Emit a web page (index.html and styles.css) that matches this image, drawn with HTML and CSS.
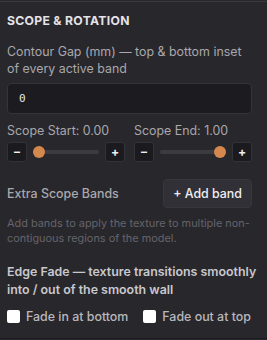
FILE: index.html
```html
<!DOCTYPE html>
<html>
<head>
<meta charset="utf-8">
<link rel="stylesheet" href="styles.css">
</head>
<body>
<section class="panel">
  <h2 class="title">SCOPE &amp; ROTATION</h2>
  <div class="field">
    <label class="label">Contour Gap (mm) — top &amp; bottom inset of every active band</label>
    <div class="input">0</div>
  </div>
  <div class="sliders">
    <div class="slider-group">
      <div class="label">Scope Start: 0.00</div>
      <div class="slider-row">
        <button class="step">–</button>
        <div class="track"><span class="thumb thumb-start"></span></div>
        <button class="step">+</button>
      </div>
    </div>
    <div class="slider-group">
      <div class="label">Scope End: 1.00</div>
      <div class="slider-row">
        <button class="step">–</button>
        <div class="track"><span class="thumb thumb-end"></span></div>
        <button class="step">+</button>
      </div>
    </div>
  </div>
  <div class="bands-row">
    <span class="label">Extra Scope Bands</span>
    <button class="add-btn">+ Add band</button>
  </div>
  <p class="help">Add bands to apply the texture to multiple non-contiguous regions of the model.</p>
  <div class="fade-title">Edge Fade — texture transitions smoothly into / out of the smooth wall</div>
  <div class="checks">
    <label class="check"><span class="box"></span>Fade in at bottom</label>
    <label class="check"><span class="box"></span>Fade out at top</label>
  </div>
</section>
</body>
</html>
```
FILE: styles.css
```css
* { box-sizing: border-box; }
html, body { margin: 0; padding: 0; background: #28272c; }
body { font-family: Inter, "Noto Sans", sans-serif; width: 267px; height: 340px; overflow: hidden; }
.panel {
  height: 338px;
  border-top: 1px solid #3a3940;
  border-bottom: 1px solid #1c1b1f;
  margin-top: 1px;
  padding: 12px 15px 0 7px;
}
.title {
  margin: 0;
  font-size: 12.2px;
  font-weight: 700;
  color: #e4e3e8;
  letter-spacing: 0.3px;
  line-height: 14px;
}
.field { margin-top: 15px; }
.label {
  display: block;
  font-size: 12.4px;
  color: #a9a8ad;
  line-height: 17px;
}
.input {
  margin-top: 6px;
  height: 31px;
  background: #1c1b20;
  border: 1px solid #35343a;
  border-radius: 4px;
  padding: 0 11px;
  font-family: "DejaVu Sans Mono", monospace;
  font-size: 11px;
  color: #e8e8ee;
  line-height: 29px;
}
.sliders {
  margin-top: 8px;
  display: grid;
  grid-template-columns: 1fr 1fr;
  column-gap: 9px;
}
.slider-row {
  margin-top: 3px;
  display: flex;
  align-items: center;
  gap: 4px;
}
.step {
  width: 20px;
  height: 20px;
  padding: 0;
  background: #1b1a1f;
  border: 1px solid #333238;
  border-radius: 3px;
  color: #f0f0f0;
  font-family: Inter, sans-serif;
  font-size: 12px;
  font-weight: 700;
  line-height: 18px;
}
.track {
  flex: 1;
  position: relative;
  height: 4px;
  background: #3c3b41;
  border-radius: 2px;
  margin: 0 2px;
}
.thumb {
  position: absolute;
  top: -4px;
  width: 12px;
  height: 12px;
  border-radius: 50%;
  background: #d4884e;
}
.thumb-start { left: 0; }
.thumb-end { right: 0; }
.bands-row {
  margin-top: 17px;
  display: flex;
  justify-content: space-between;
  align-items: center;
}
.bands-row .label { font-weight: 500; }
.add-btn {
  height: 29px;
  padding: 0 9px;
  background: #313036;
  border: 1px solid #37363c;
  border-radius: 4px;
  color: #eeeef2;
  font-family: Inter, sans-serif;
  font-size: 12.4px;
  font-weight: 500;
}
.help {
  margin: 8px 0 0;
  font-size: 10.9px;
  line-height: 14.5px;
  color: #65646a;
}
.fade-title {
  margin-top: 18px;
  margin-right: -10px;
  font-size: 12.4px;
  font-weight: 600;
  color: #c9c8cd;
  line-height: 18px;
}
.checks {
  margin-top: 10px;
  display: flex;
  gap: 15px;
}
.check {
  display: flex;
  align-items: center;
  gap: 6px;
  font-size: 12.4px;
  font-weight: 500;
  color: #b9b8bd;
}
.box {
  width: 13px;
  height: 13px;
  background: #ffffff;
  border-radius: 2px;
}
```
